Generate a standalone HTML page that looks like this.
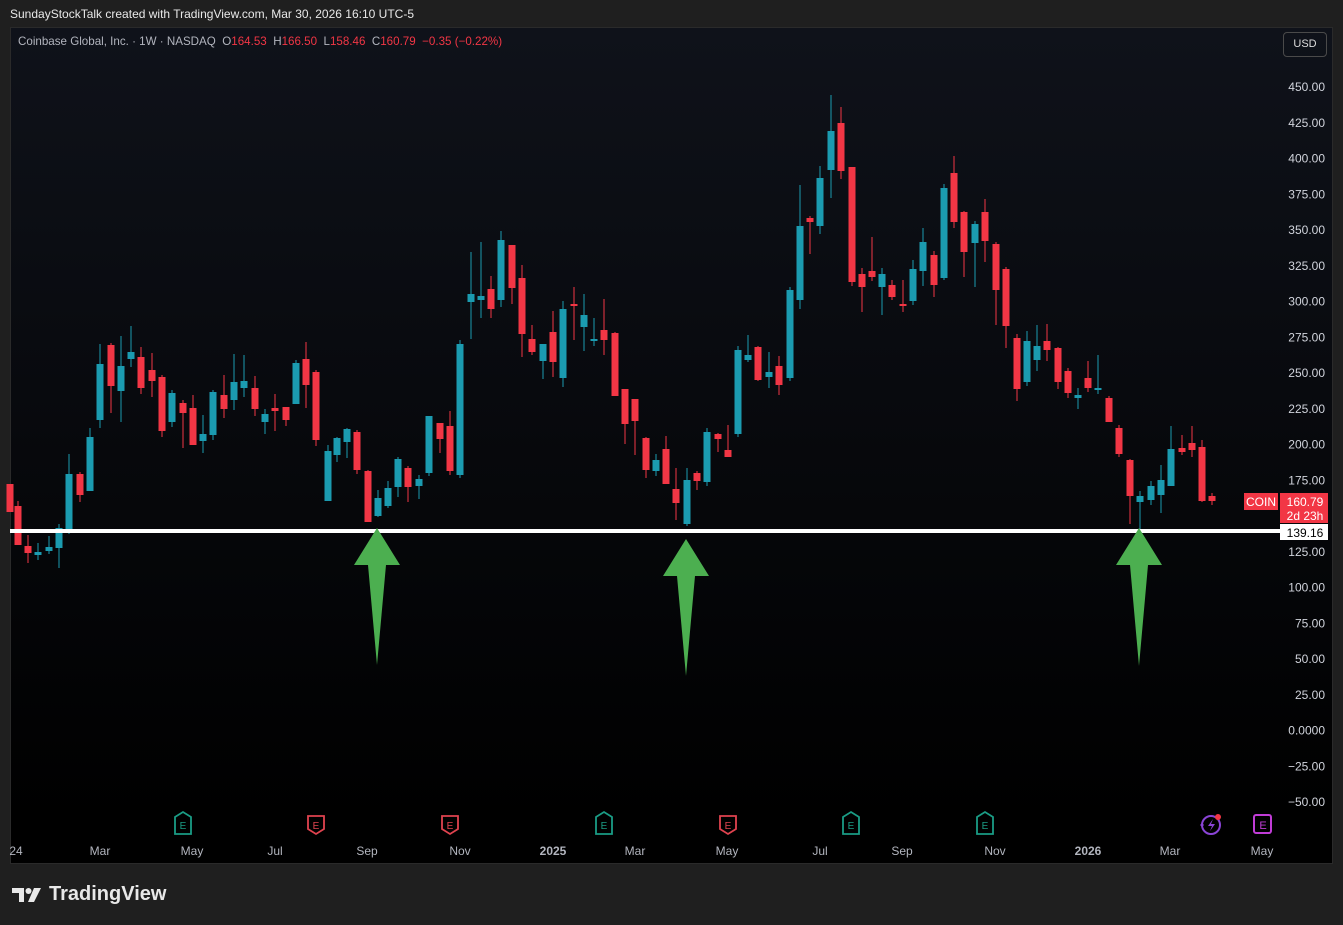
<!DOCTYPE html>
<html><head><meta charset="utf-8">
<style>
body{margin:0;width:1343px;height:925px;background:#1f1f1f;overflow:hidden;font-family:"Liberation Sans",sans-serif;position:relative}
.hdr{position:absolute;left:10px;top:7px;color:#e8e8e8;font-size:12px;}
.panel{position:absolute;left:10px;top:27px;width:1323px;height:837px;background:linear-gradient(#0f121a,#000 95%);border:1px solid #2a2a2a;box-sizing:border-box}
.leg{position:absolute;left:18px;top:35px;font-size:11.6px;color:#b2b5be}
.leg .r{color:#f23645}
.usd{position:absolute;left:1283px;top:32px;width:44px;height:25px;border:1px solid #4a4a4a;border-radius:4px;box-sizing:border-box;color:#ddd;font-size:11px;text-align:center;line-height:23px}
.logo{position:absolute;left:12px;top:883px;color:#e8e8e8;font-size:20px;font-weight:bold;display:flex;align-items:center;gap:7px}
</style></head><body>
<div class="hdr">SundayStockTalk created with TradingView.com, Mar 30, 2026 16:10 UTC-5</div>
<div class="panel"></div>
<svg id="s" width="1343" height="925" style="position:absolute;left:0;top:0"></svg>
<div class="leg">Coinbase Global, Inc. · 1W · NASDAQ &nbsp;O<span class="r">164.53</span> &nbsp;H<span class="r">166.50</span> &nbsp;L<span class="r">158.46</span> &nbsp;C<span class="r">160.79</span> &nbsp;<span class="r">−0.35 (−0.22%)</span></div>
<div class="usd">USD</div>
<div class="logo"><svg width="30" height="18" viewBox="0 0 30 18"><path d="M0 2h12v14H7V7H0z" fill="#e8e8e8"/><circle cx="16.5" cy="5" r="3" fill="#e8e8e8"/><path d="M22 2h7l-7 14h-6z" fill="#e8e8e8"/></svg>TradingView</div>
<script>
const d=[
[10,484,512,484,512,0],[18,506,545,501,545,0],[28,546,553,535,563,0],[38,552,555,543,560,1],[49,547,551,536,554,1],[59,528,548,524,568,1],[69,474,531,454,534,1],[80,474,495,472,502,0],[90,437,491,428,491,1],[100,364,420,344,428,1],[111,345,386,343,413,0],[121,366,391,336,422,1],[131,352,359,326,367,1],[141,357,388,347,394,0],[152,370,381,353,397,0],[162,377,431,375,437,0],[172,393,422,390,427,1],[183,403,413,400,448,0],[193,408,445,395,445,0],[203,434,441,415,453,1],[213,392,435,390,440,1],[224,395,409,375,418,0],[234,382,400,354,410,1],[244,381,388,355,397,1],[255,388,409,376,416,0],[265,414,422,409,434,1],[275,408,411,394,431,0],[286,407,420,407,426,0],[296,363,404,360,404,1],[306,359,385,342,408,0],[316,372,440,370,446,0],
[328,451,501,445,501,1],[337,438,455,437,462,1],[347,429,442,428,458,1],[357,432,470,430,474,0],[368,471,522,470,522,0],[378,498,516,490,517,1],[388,488,506,481,508,1],[398,459,487,457,497,1],[408,468,487,466,502,0],[419,479,486,475,499,1],[429,416,473,416,476,1],[440,423,439,423,453,0],[450,426,471,411,475,0],[460,344,475,340,478,1],[471,294,302,252,339,1],[481,296,300,242,318,1],[491,289,309,276,318,0],[501,240,300,231,307,1],[512,245,288,245,304,0],[522,278,334,265,357,0],[532,339,352,325,355,0],[543,344,361,344,379,1],[553,332,362,311,377,0],[563,309,378,301,387,1],[574,304,306,287,340,0],[584,315,327,294,351,1],[594,339,341,318,346,1],[604,330,340,299,355,0],[615,333,396,332,396,0],[625,389,424,389,444,0],[635,399,421,399,455,0],
[646,438,470,437,478,0],[656,460,471,454,476,1],[666,449,484,436,484,0],[676,489,503,468,520,0],[687,480,524,468,526,1],[697,473,481,471,490,0],[707,432,482,428,486,1],[718,434,439,433,452,0],[728,450,457,425,455,0],[738,350,434,346,437,1],[748,355,360,335,362,1],[758,347,380,346,381,0],[769,372,377,352,388,1],[779,366,385,356,395,0],[790,290,378,287,381,1],[800,226,300,185,309,1],[810,218,222,216,254,0],[820,178,226,166,234,1],[831,131,170,95,198,1],[841,123,171,107,179,0],[852,167,282,167,286,0],[862,274,287,268,312,0],[872,271,277,237,281,0],[882,274,287,268,315,1],[892,285,297,280,300,0],[903,304,306,280,312,0],[913,269,301,260,305,1],[923,242,271,228,286,1],[934,255,285,251,297,0],[944,188,278,184,280,1],
[954,173,222,156,228,0],[964,212,252,211,277,0],[975,224,243,221,287,1],[985,212,241,199,262,0],[996,244,290,242,325,0],[1006,269,326,267,348,0],[1017,338,389,334,401,0],[1027,341,382,331,386,1],[1037,346,360,325,371,1],[1047,341,350,324,361,0],[1058,348,382,347,389,0],[1068,371,393,368,398,0],[1078,395,398,388,409,1],[1088,378,388,361,392,0],[1098,388,390,355,394,1],[1109,398,422,396,422,0],[1119,428,454,425,457,0],[1130,460,496,459,524,0],[1140,496,502,491,530,1],[1151,486,500,481,505,1],[1161,480,495,465,513,1],[1171,449,486,426,486,1],[1182,448,452,435,455,0],[1192,443,450,426,457,0],[1202,447,501,440,502,0],[1212,496,501,493,505,0]];
let h='';
for(const c of d){const col=c[5]?'#1b9bb0':'#f23645';
h+=`<rect x="${c[0]-0.5}" y="${c[3]}" width="1" height="${c[4]-c[3]}" fill="${col}"/>`;
h+=`<rect x="${c[0]-3.5}" y="${c[1]}" width="7" height="${Math.max(2,c[2]-c[1])}" fill="${col}"/>`;}
h+=`<rect x="10" y="529" width="1270" height="4" fill="#fff"/>`;
function arr(x,t,b){return `<path d="M${x} ${t} L${x+23} ${t+37} L${x+9} ${t+37} L${x} ${b} L${x-9} ${t+37} L${x-23} ${t+37} Z" fill="#4caf50"/>`;}
h+=arr(377,528,665)+arr(686,539,676)+arr(1139,528,666);
for(let i=0;i<=20;i++){const v=450-25*i;const y=87+i*35.75;let t=v===0?'0.0000':(v<0?'−'+Math.abs(v).toFixed(2):v.toFixed(2));
h+=`<text x="1325" y="${y+4}" text-anchor="end" font-size="12" fill="#d1d4dc" font-family="Liberation Sans">${t}</text>`;}
h+=`<rect x="1244" y="493" width="34" height="17" fill="#f23645"/><text x="1261" y="506" text-anchor="middle" font-size="12" fill="#fff" font-family="Liberation Sans">COIN</text>`;
h+=`<rect x="1280" y="493" width="48" height="30" fill="#f23645"/><text x="1305" y="506" text-anchor="middle" font-size="12" fill="#fff" font-family="Liberation Sans">160.79</text><text x="1305" y="520" text-anchor="middle" font-size="12" fill="#fff" font-family="Liberation Sans">2d 23h</text>`;
h+=`<rect x="1280" y="524" width="48" height="16" fill="#fff"/><text x="1305" y="537" text-anchor="middle" font-size="12" fill="#000" font-family="Liberation Sans">139.16</text>`;
const ta=[[16,'24'],[100,'Mar'],[192,'May'],[275,'Jul'],[367,'Sep'],[460,'Nov'],[553,'2025',1],[635,'Mar'],[727,'May'],[820,'Jul'],[902,'Sep'],[995,'Nov'],[1088,'2026',1],[1170,'Mar'],[1262,'May']];
for(const a of ta)h+=`<text x="${a[0]}" y="855" text-anchor="middle" font-size="12" fill="#b2b5be" ${a[2]?'font-weight="bold"':''} font-family="Liberation Sans">${a[1]}</text>`;
function E(x,col,up){const p=up?`M${x-8} ${817}L${x} ${812}L${x+8} ${817}V${834}H${x-8}Z`:`M${x-8} ${816}H${x+8}V${829}L${x} ${834}L${x-8} ${829}Z`;
return `<path d="${p}" fill="none" stroke="${col}" stroke-width="1.8"/><text x="${x}" y="829" text-anchor="middle" font-size="10" fill="${col}" font-family="Liberation Sans">E</text>`;}
for(const x of [183,604,851,985])h+=E(x,'#1a9c85',1);
for(const x of [316,450,728])h+=E(x,'#e0434f',0);
h+=`<rect x="1254" y="815" width="17" height="18" rx="2" fill="none" stroke="#c03cd6" stroke-width="2"/><text x="1263" y="829" text-anchor="middle" font-size="11" fill="#c03cd6" font-family="Liberation Sans">E</text>`;
h+=`<circle cx="1211" cy="825" r="9" fill="none" stroke="#8a44d6" stroke-width="2"/><path d="M1213 819l-5 7h4l-2 5 5-7h-4z" fill="#8a44d6"/><circle cx="1218" cy="817" r="3" fill="#f23645"/><path d="M1200 825l2-2 2 2-2 2z" fill="#8a44d6"/>`;
document.getElementById('s').innerHTML=h;
</script>
</body></html>
